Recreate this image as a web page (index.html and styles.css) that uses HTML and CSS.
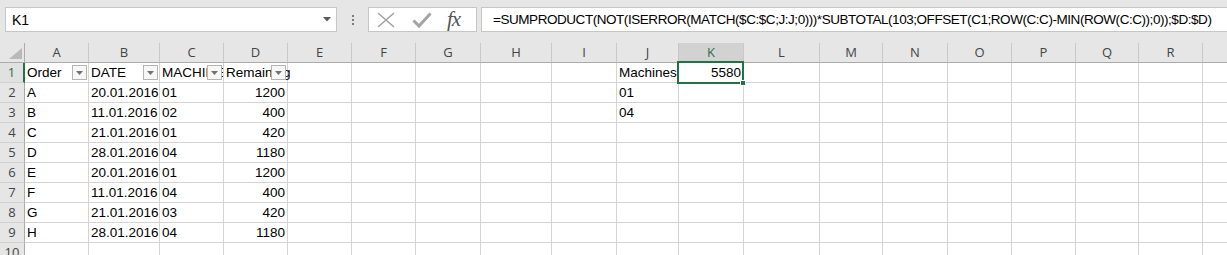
FILE: index.html
```html
<!DOCTYPE html>
<html lang="en">
<head>
    <meta charset="UTF-8">
    <title>Excel - SUMPRODUCT</title>
    <link rel="stylesheet" href="styles.css">
</head>
<body>
    <div class="toolbar">
        <div class="name-box">
            <span>K1</span>
            <svg class="name-arrow" width="8" height="5" viewBox="0 0 8 5"><polygon points="0,0 8,0 4,4.5" fill="#5a5a5a"/></svg>
        </div>
        <div class="grip"><i></i><i></i><i></i></div>
        <div class="fx-buttons">
            <svg width="18" height="16" viewBox="0 0 18 16"><path d="M1 1 L17 15 M17 1 L1 15" stroke="#a3a3a3" stroke-width="1.6" fill="none"/></svg>
            <svg width="20" height="16" viewBox="0 0 20 16"><path d="M1.5 8.5 L7 14 L18.5 1.5" stroke="#a3a3a3" stroke-width="3" fill="none"/></svg>
            <span class="fx">fx</span>
        </div>
        <div class="formula">=SUMPRODUCT(NOT(ISERROR(MATCH($C:$C;J:J;0)))*SUBTOTAL(103;OFFSET(C1;ROW(C:C)-MIN(ROW(C:C));0));$D:$D)</div>
    </div>

    <div class="sheet" id="sheet"></div>

    <script>
        const columns = ['A','B','C','D','E','F','G','H','I','J','K','L','M','N','O','P','Q','R','S'];

        // cell contents: row -> column -> value
        const data = {
            1: { A: 'Order', B: 'DATE', C: 'MACHINE', D: 'Remaining', J: 'Machines', K: 5580 },
            2: { A: 'A', B: '20.01.2016', C: '01', D: 1200, J: '01' },
            3: { A: 'B', B: '11.01.2016', C: '02', D: 400, J: '04' },
            4: { A: 'C', B: '21.01.2016', C: '01', D: 420 },
            5: { A: 'D', B: '28.01.2016', C: '04', D: 1180 },
            6: { A: 'E', B: '20.01.2016', C: '01', D: 1200 },
            7: { A: 'F', B: '11.01.2016', C: '04', D: 400 },
            8: { A: 'G', B: '21.01.2016', C: '03', D: 420 },
            9: { A: 'H', B: '28.01.2016', C: '04', D: 1180 }
        };
        const filterCols = ['A', 'B', 'C', 'D'];
        const dateCols = ['B'];

        function makeCell(className, text) {
            const el = document.createElement('div');
            el.className = className;
            if (text !== undefined) el.textContent = text;
            return el;
        }

        function buildSheet() {
            const sheet = document.getElementById('sheet');

            const corner = makeCell('corner');
            corner.innerHTML = '<svg width="13" height="11" viewBox="0 0 13 11"><polygon points="13,0 13,11 0,11" fill="#b9b9b9"/></svg>';
            sheet.appendChild(corner);

            columns.forEach(col => {
                sheet.appendChild(makeCell(col === 'K' ? 'col-head active' : 'col-head', col));
            });

            for (let r = 1; r <= 10; r++) {
                sheet.appendChild(makeCell(r === 1 ? 'row-head active' : 'row-head', r));
                columns.forEach(col => {
                    const value = data[r] ? data[r][col] : undefined;
                    const cell = makeCell('cell');
                    if (value !== undefined) {
                        cell.textContent = value;
                        if (typeof value === 'number' || dateCols.includes(col) && r > 1) {
                            cell.classList.add('num');
                        }
                    }
                    if (r === 1 && filterCols.includes(col)) {
                        cell.classList.add('has-filter');
                        if (col === 'D') cell.classList.add('spill');
                        const btn = makeCell('filter-btn');
                        btn.innerHTML = '<svg width="7" height="4" viewBox="0 0 7 4"><polygon points="0,0 7,0 3.5,4" fill="#707070"/></svg>';
                        cell.appendChild(btn);
                    }
                    if (r === 1 && col === 'K') {
                        cell.classList.add('selected');
                        const sel = makeCell('selection');
                        sel.appendChild(makeCell('fill-handle'));
                        cell.appendChild(sel);
                    }
                    sheet.appendChild(cell);
                });
            }
        }

        buildSheet();
    </script>
</body>
</html>
```

FILE: styles.css
```css
body {
    margin: 0;
    background-color: #fff;
    font-family: 'Liberation Sans', Arial, sans-serif;
    color: #000;
    overflow: hidden;
}
.toolbar {
    display: flex;
    height: 43px;
    box-sizing: border-box;
    padding: 7px 0 11px 5px;
    background-color: #e6e6e6;
}
.name-box {
    width: 332px;
    box-sizing: border-box;
    border: 1px solid #c6c6c6;
    background-color: #fff;
    display: flex;
    align-items: center;
    justify-content: space-between;
    padding: 0 5px 0 6px;
    font-size: 14px;
}
.grip {
    width: 31px;
    display: flex;
    flex-direction: column;
    align-items: center;
    justify-content: center;
    gap: 2px;
}
.grip i {
    width: 2px;
    height: 2px;
    background-color: #7a7a7a;
}
.fx-buttons {
    width: 109px;
    box-sizing: border-box;
    border: 1px solid #c6c6c6;
    background-color: #fff;
    display: flex;
    align-items: center;
    padding: 0 0 0 8px;
    gap: 17px;
}
.fx {
    font-family: 'Liberation Serif', 'Times New Roman', serif;
    font-style: italic;
    font-size: 21px;
    color: #555;
    margin-left: -2px;
    letter-spacing: -1px;
}
.formula {
    flex: 1;
    margin-left: 4px;
    border: 1px solid #c6c6c6;
    border-right: none;
    background-color: #fff;
    padding-left: 11px;
    font-size: 13.5px;
    letter-spacing: -0.45px;
    line-height: 23px;
    white-space: nowrap;
    overflow: hidden;
}
.sheet {
    display: grid;
    grid-template-columns: 25px 64px 71px 64px 64px 64px 64px 65px 71px 65px 62px 65px 76px 63px 65px 64px 64px 63px 64px 64px;
    grid-auto-rows: 20px;
}
.corner,
.col-head,
.row-head {
    box-sizing: border-box;
    background-color: #e6e6e6;
    font-family: 'Open Sans', 'Noto Sans', sans-serif;
    font-size: 13px;
    color: #444;
    text-align: center;
    line-height: 19px;
}
.corner {
    border-right: 1px solid #ababab;
    border-bottom: 1px solid #ababab;
    display: flex;
    align-items: flex-end;
    justify-content: flex-end;
    padding: 0 2px 3px 0;
}
.col-head {
    border-right: 1px solid #c8c8c8;
    border-bottom: 1px solid #ababab;
}
.col-head.active {
    background-color: #d2d2d2;
    color: #217346;
    border-bottom: 2px solid #217346;
}
.row-head {
    border-right: 1px solid #ababab;
    border-bottom: 1px solid #d0d0d0;
}
.row-head.active {
    background-color: #e1e1e1;
    color: #217346;
    border-right: 2px solid #217346;
}
.cell {
    position: relative;
    box-sizing: border-box;
    border-right: 1px solid #d4d4d4;
    border-bottom: 1px solid #d4d4d4;
    padding: 0 2px;
    font-size: 13.5px;
    line-height: 20px;
    white-space: nowrap;
    overflow: hidden;
}
.cell.num {
    text-align: right;
}
.cell.spill,
.cell.selected {
    overflow: visible;
}
.cell.selected {
    z-index: 2;
}
.filter-btn {
    position: absolute;
    top: 2px;
    right: 1px;
    width: 15px;
    height: 15px;
    box-sizing: border-box;
    border: 1px solid #b4b4b4;
    background-color: #f7f7f7;
    display: flex;
    align-items: center;
    justify-content: center;
}
.selection {
    position: absolute;
    top: -2px;
    left: -2px;
    right: -1px;
    bottom: -2px;
    border: 2px solid #217346;
}
.fill-handle {
    position: absolute;
    right: -4px;
    bottom: -4px;
    width: 4px;
    height: 4px;
    background-color: #217346;
    border: 1px solid #fff;
}
```
